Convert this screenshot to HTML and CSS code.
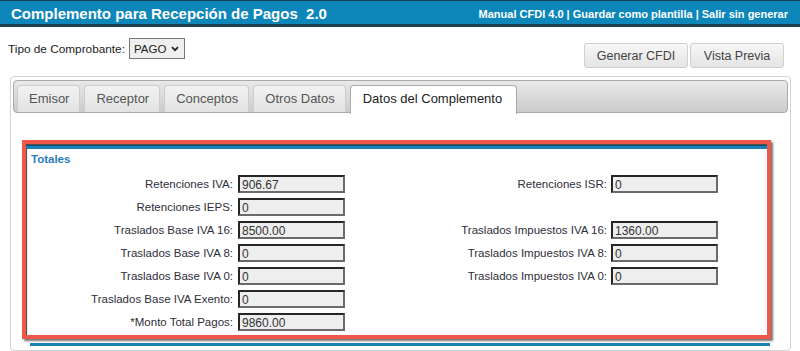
FILE: index.html
```html
<!DOCTYPE html>
<html lang="es">
<head>
  <meta charset="UTF-8" />
  <title>Complemento para Recepción de Pagos 2.0</title>
  <link rel="stylesheet" href="styles.css">
</head>
<body>
  <div class="topbar">
    <h1 class="title">Complemento para Recepción de Pagos&nbsp; 2.0</h1>
    <div class="links">
      <a href="#">Manual CFDI 4.0</a> | <a href="#">Guardar como plantilla</a> | <a href="#">Salir sin generar</a>
    </div>
  </div>

  <div class="toolbar">
    <div class="tipo">
      <span>Tipo de Comprobante:</span>
      <div class="fake-select">
        <span>PAGO</span>
        <svg width="8" height="6" viewBox="0 0 8 6"><path d="M1 1.2 L4 4.2 L7 1.2" fill="none" stroke="#222" stroke-width="1.8"/></svg>
      </div>
    </div>
    <div class="actions">
      <button class="button">Generar CFDI</button>
      <button class="button">Vista Previa</button>
    </div>
  </div>

  <div class="panel">
    <ul class="tabs">
      <li class="tab">Emisor</li>
      <li class="tab">Receptor</li>
      <li class="tab">Conceptos</li>
      <li class="tab">Otros Datos</li>
      <li class="tab active">Datos del Complemento</li>
    </ul>

    <!-- marked section -->
    <div class="highlight">
      <div class="section">
        <div class="section-title">Totales</div>
        <div class="fields">
          <label>Retenciones IVA:</label><input class="field" value="906.67" readonly>
          <label>Retenciones ISR:</label><input class="field" value="0" readonly>

          <label>Retenciones IEPS:</label><input class="field" value="0" readonly>
          <span></span><span></span>

          <label>Traslados Base IVA 16:</label><input class="field" value="8500.00" readonly>
          <label>Traslados Impuestos IVA 16:</label><input class="field" value="1360.00" readonly>

          <label>Traslados Base IVA 8:</label><input class="field" value="0" readonly>
          <label>Traslados Impuestos IVA 8:</label><input class="field" value="0" readonly>

          <label>Traslados Base IVA 0:</label><input class="field" value="0" readonly>
          <label>Traslados Impuestos IVA 0:</label><input class="field" value="0" readonly>

          <label>Traslados Base IVA Exento:</label><input class="field" value="0" readonly>
          <span></span><span></span>

          <label>*Monto Total Pagos:</label><input class="field" value="9860.00" readonly>
          <span></span><span></span>
        </div>
      </div>
    </div>

    <div class="next-section"></div>
  </div>
</body>
</html>
```

FILE: styles.css
```css
body {
  margin: 0;
  overflow: hidden;
  background: #fff;
  font-family: "Liberation Sans", Arial, sans-serif;
  color: #333;
}
.topbar {
  display: flex;
  justify-content: space-between;
  align-items: center;
  height: 23px;
  padding: 0 12px 0 11px;
  background: #0d86ba;
  border-top: 1px solid #1d3f52;
  border-bottom: 3px solid #1e3d50;
}
.title {
  margin: 0;
  font-size: 15px;
  font-weight: bold;
  color: #fff;
  padding-top: 2px;
}
.links {
  font-size: 11px;
  font-weight: bold;
  color: #fff;
  padding-top: 2px;
}
.links a {
  color: #fff;
  text-decoration: none;
}
.toolbar {
  display: flex;
  justify-content: space-between;
  align-items: flex-start;
  padding: 11px 16px 0 8px;
  height: 38px;
}
.tipo {
  display: flex;
  align-items: center;
  gap: 4px;
  font-size: 11.8px;
  color: #222;
}
.fake-select {
  display: flex;
  align-items: center;
  gap: 5px;
  height: 19px;
  padding: 0 5px 0 4px;
  border: 1px solid #767676;
  background: #efefef;
  font-size: 11.5px;
  color: #222;
}
.actions {
  display: flex;
  gap: 2px;
  margin-top: 5px;
}
.button {
  height: 25px;
  padding: 0;
  white-space: nowrap;
  font-family: inherit;
  font-size: 12.5px;
  color: #444;
  background: linear-gradient(#f7f7f7, #e4e4e4);
  border: 1px solid #cfcfcf;
  border-radius: 3px;
}
.button:first-child {
  width: 104px;
}
.button:last-child {
  width: 94px;
}
.panel {
  margin: 0 9px 0 10px;
  padding: 3px 2px 0;
  border: 1px solid #d3d3d3;
  border-radius: 4px;
  height: 270px;
}
.tabs {
  display: flex;
  gap: 4px;
  list-style: none;
  margin: 0;
  padding: 4px 3px 0;
  height: 27px;
  background: linear-gradient(#e9e9e9, #cbcbcb);
  border: 1px solid #aaa;
  border-radius: 4px;
}
.tab {
  height: 26px;
  line-height: 26px;
  padding: 0 10px 0 11px;
  font-size: 13px;
  color: #555;
  background: linear-gradient(#f2f2f2, #e2e2e2);
  border: 1px solid #cdcdcd;
  border-bottom: none;
  border-radius: 4px 4px 0 0;
}
.tab.active {
  background: #fff;
  color: #222;
  border-color: #aaa;
  height: 28px;
  margin-bottom: -1px;
  padding: 0 14px 0 12px;
}
.highlight {
  margin: 27px 17px 0 9px;
  border: 4px solid #ef5849;
  box-shadow: inset 1px 1px 1px rgba(0, 0, 0, 0.75), 2px 2px 2px rgba(0, 0, 0, 0.55);
}
.section {
  border-top: 3px solid #1b82b6;
  box-shadow: 0 -1px 0 #0f4d70;
  margin-top: 2px;
  padding: 3px 0 4px 1px;
}
.section-title {
  font-size: 11.5px;
  font-weight: bold;
  color: #2a7cbd;
  line-height: 14px;
  padding-left: 4px;
}
.fields {
  display: grid;
  grid-template-columns: 206px 107px 257px 107px;
  grid-auto-rows: 18px;
  column-gap: 5px;
  row-gap: 5px;
  margin-top: 9px;
  align-items: center;
}
.fields label {
  text-align: right;
  font-size: 11.5px;
  color: #2e2e3a;
  white-space: nowrap;
}
.fields .field:nth-child(4n) {
  margin-left: -1px;
}
.field {
  box-sizing: border-box;
  width: 107px;
  height: 18px;
  padding: 2px 2px 0;
  font-family: inherit;
  font-size: 12px;
  color: #333;
  background: #eee;
  border: 2px solid;
  border-color: #262626 #6a6a6a #6a6a6a #262626;
  outline: none;
}
.next-section {
  margin: 4px 18px 0 17px;
  border-top: 3px solid #1b82b6;
}
```
